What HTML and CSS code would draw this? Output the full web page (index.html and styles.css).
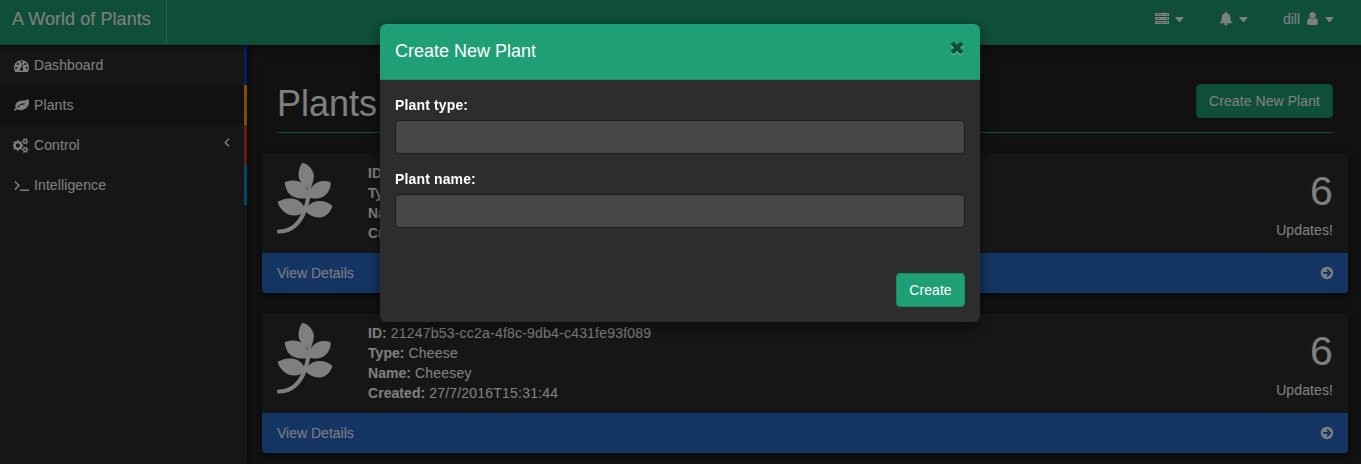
FILE: index.html
```
<!DOCTYPE html>
<html lang="en">
<head>
<meta charset="utf-8">
<title>A World of Plants</title>
<link rel="stylesheet" href="styles.css">
</head>
<body>
<svg class="defs" aria-hidden="true">
  <symbol id="sprig" viewBox="0 0 56 72">
    <path class="stem" d="M1.800 69.500C15 70 23.500 60 27.500 49C30.500 41 32.700 32 32.700 20"/>
    <path d="M25.300 .8C33 3 37 9 36.800 15C36.500 20 34.500 24 32.500 27C25.500 24 21.300 18 21.500 12C21.800 7 23.500 3 25.300 .8Z"/>
    <path d="M7.800 20.300C15 17.300 22.500 18.500 27 22.500C30.500 26 31.500 31 31.500 36C25 37.300 17.500 36.800 12.500 32C9.500 29 7.800 24 7.800 20.300Z"/>
    <path d="M53.800 20.300C47 17.500 40 19 36 23.500C33.500 27 32.500 31 32 35.800C38 37.300 45.500 36.800 50 31.500C52.500 28.500 54 24 53.800 20.300Z"/>
    <path d="M.6 39.800C7 36 14.500 35.500 20 37.700C25 40.500 27.500 44 28.500 49C23.500 54 15 54.800 9 51.200C5 48.500 1.800 44.500 .6 39.800Z"/>
    <path d="M55.300 44C50 38.500 42 38 36.500 40C32 42 30 45 28 48.500C33 54.500 41 57 47 54.500C51 52.500 54 49 55.300 44Z"/>
  </symbol>
  <symbol id="go" viewBox="0 0 14 14">
    <circle cx="7" cy="7" r="6.200"/>
    <path class="go-arrow" d="M3 7H10M7 3.500L10.400 7L7 10.500"/>
  </symbol>
</svg>

<header class="topbar">
  <a class="brand">A World of Plants</a>
  <ul class="menu">
    <li><svg class="ic" viewBox="0 0 14 12"><path fill-rule="evenodd" d="M0 0H14V3H0ZM1 1.300V1.800H8V1.300ZM11.500 1V2H13V1ZM0 4H14V7H0ZM1 5.300V5.800H5V5.300ZM11.500 5V6H13V5ZM0 8H14V11H0ZM1 9.300V9.800H10V9.300ZM11.500 9V10H13V9Z"/></svg><i class="caret"></i></li>
    <li><svg class="ic" viewBox="0 0 14 14"><path d="M7 0C7.700 0 8.200.6 8 1.200C10.300 1.700 11.300 3.500 11.300 5.500C11.300 8 12 9.700 13.500 11.300H.5C2 9.700 2.700 8 2.700 5.500C2.700 3.500 3.700 1.700 6 1.200C5.800.6 6.300 0 7 0ZM5 11.500H9C9 14.300 5 14.300 5 11.500Z"/></svg><i class="caret"></i></li>
    <li><span>dill</span><svg class="ic user" viewBox="0 0 1792 1792"><path d="M1536 1399q0 109-62.500 187t-150.500 78h-854q-88 0-150.500-78t-62.500-187q0-85 8.500-160.500t31.500-152 58.500-131 94-89 134.500-34.500q131 128 313 128t313-128q76 0 134.500 34.500t94 89 58.500 131 31.500 152 8.500 160.500zm-256-887q0 159-112.500 271.500t-271.500 112.500-271.500-112.500-112.500-271.500 112.500-271.500 271.500-112.500 271.500 112.500 112.500 271.500z"/></svg><i class="caret"></i></li>
  </ul>
</header>

<div class="layout">
  <nav class="sidebar">
    <a class="item blue"><svg class="ic" viewBox="0 0 1792 1792"><path d="M384 1152q0-53-37.500-90.500t-90.500-37.500-90.500 37.500-37.500 90.500 37.500 90.500 90.500 37.500 90.500-37.500 37.500-90.500zm192-448q0-53-37.500-90.500t-90.500-37.500-90.500 37.500-37.500 90.500 37.500 90.500 90.500 37.500 90.500-37.500 37.500-90.500zm428 481l101-382q6-26-7.500-48.500t-38.500-29.500-48 6.500-30 39.500l-101 382q-60 5-107 43.500t-63 98.500q-20 77 20 146t117 89 146-20 89-117q16-60-6-117t-72-91zm660-33q0-53-37.500-90.500t-90.500-37.500-90.500 37.500-37.500 90.500 37.500 90.500 90.500 37.500 90.500-37.500 37.500-90.500zm-640-640q0-53-37.500-90.500t-90.500-37.500-90.500 37.500-37.500 90.500 37.500 90.500 90.500 37.500 90.500-37.500 37.500-90.500zm448 192q0-53-37.500-90.500t-90.500-37.500-90.500 37.500-37.500 90.500 37.500 90.500 90.500 37.500 90.500-37.500 37.500-90.500zm320 448q0 261-141 483-19 29-54 29h-1402q-35 0-54-29-141-221-141-483 0-182 71-348t191-286 286-191 348-71 348 71 286 191 191 286 71 348z"/></svg>Dashboard</a>
    <a class="item orange active"><svg class="ic" viewBox="0 0 1792 1792"><path d="M1280 704q0-26-19-45t-45-19q-172 0-318 49.500t-259.500 134-235.500 219.500q-19 21-19 45 0 26 19 45t45 19q24 0 45-19 27-24 74-71t67-66q137-124 268.500-176t313.500-52q26 0 45-19t19-45zm512-198q0 95-20 193-46 224-184.500 383t-357.500 268q-214 108-438 108-148 0-286-47-15-5-88-42t-96-37q-16 0-39.500 32t-45 70-52.500 70-60 32q-43 0-63.500-17.500t-45.500-59.500q-2-4-6-11t-5.500-10-3-9.500-1.500-13.500q0-35 31-73.500t68-65.500 68-56 31-48q0-4-14-38t-16-44q-9-51-9-104 0-115 43.500-220t119-184.500 170.500-139 204-95.500q55-18 145-25.500t179.500-9 178.500-6 163.500-24 113.500-56.500l29.500-29.500 29.500-28 27-20 36.500-16 43.500-4.500q39 0 70.500 46t47.500 112 24 124 8 96z"/></svg>Plants</a>
    <a class="item red"><svg class="ic wide" viewBox="0 0 1920 1792"><path d="M832 896q0-106-75-181t-181-75-181 75-75 181 75 181 181 75 181-75 75-181zm768 512q0-52-38-90t-90-38-90 38-38 90q0 53 37.500 90.500t90.500 37.500 90.500-37.500 37.500-90.500zm0-1024q0-52-38-90t-90-38-90 38-38 90q0 53 37.500 90.500t90.500 37.500 90.500-37.500 37.500-90.500zm-384 421v185q0 10-7 19.500t-16 10.500l-155 24q-11 35-32 76 34 48 90 115 7 11 7 20 0 12-7 19-23 30-82.500 89.500t-78.500 59.500q-11 0-21-7l-115-90q-37 19-77 31-11 108-23 155-7 24-30 24h-186q-11 0-20-7.500t-10-17.500l-23-153q-34-10-75-31l-118 89q-7 7-20 7-11 0-21-8-144-133-144-160 0-9 7-19 10-14 41-53t47-61q-23-44-35-82l-152-24q-10-1-17-9.500t-7-19.500v-185q0-10 7-19.500t16-10.500l155-24q11-35 32-76-34-48-90-115-7-11-7-20 0-12 7-20 22-30 82-89t79-59q11 0 21 7l115 90q34-18 77-32 11-108 23-154 7-24 30-24h186q11 0 20 7.500t10 17.500l23 153q34 10 75 31l118-89q8-7 20-7 11 0 21 8 144 133 144 160 0 8-7 19-12 16-42 54t-45 60q23 48 34 82l152 23q10 2 17 10.500t7 19.500zm640 533v140q0 16-149 31-12 27-30 52 51 113 51 138 0 4-4 7-122 71-124 71-8 0-46-47t-52-68q-20 2-30 2t-30-2q-14 21-52 68t-46 47q-2 0-124-71-4-3-4-7 0-25 51-138-18-25-30-52-149-15-149-31v-140q0-16 149-31 13-29 30-52-51-113-51-138 0-4 4-7 4-2 35-20t59-34 30-16q8 0 46 46.500t52 67.500q20-2 30-2t30 2q51-71 92-112l6-2q4 0 124 70 4 3 4 7 0 25-51 138 17 23 30 52 149 15 149 31zm0-1024v140q0 16-149 31-12 27-30 52 51 113 51 138 0 4-4 7-122 71-124 71-8 0-46-47t-52-68q-20 2-30 2t-30-2q-14 21-52 68t-46 47q-2 0-124-71-4-3-4-7 0-25 51-138-18-25-30-52-149-15-149-31v-140q0-16 149-31 13-29 30-52-51-113-51-138 0-4 4-7 4-2 35-20t59-34 30-16q8 0 46 46.500t52 67.500q20-2 30-2t30 2q51-71 92-112l6-2q4 0 124 70 4 3 4 7 0 25-51 138 17 23 30 52 149 15 149 31z"/></svg>Control<svg class="chev" viewBox="0 0 6 9"><path d="M5 .7L1.200 4.500L5 8.300"/></svg></a>
    <a class="item cyan"><svg class="ic line" viewBox="0 0 14 14"><path d="M.8 3.200L4.600 7L.8 10.800M5.500 11.500H14"/></svg>Intelligence</a>
  </nav>

  <main class="page">
    <div class="heading">
      <h1>Plants</h1>
      <button class="btn btn-new">Create New Plant</button>
    </div>
    <section class="card">
      <div class="card-body">
        <svg class="sprig"><use href="#sprig"/></svg>
        <div class="info">
          <div><b>ID:</b></div>
          <div><b>Type:</b></div>
          <div><b>Name:</b></div>
          <div><b>Created:</b></div>
        </div>
        <div class="stat"><div class="num">6</div><div>Updates!</div></div>
      </div>
      <div class="card-foot"><span>View Details</span><svg class="go"><use href="#go"/></svg></div>
    </section>
    <section class="card">
      <div class="card-body">
        <svg class="sprig"><use href="#sprig"/></svg>
        <div class="info">
          <div><b>ID:</b> <span>21247b53-cc2a-4f8c-9db4-c431fe93f089</span></div>
          <div><b>Type:</b> <span>Cheese</span></div>
          <div><b>Name:</b> <span>Cheesey</span></div>
          <div><b>Created:</b> <span>27/7/2016T15:31:44</span></div>
        </div>
        <div class="stat"><div class="num">6</div><div>Updates!</div></div>
      </div>
      <div class="card-foot"><span>View Details</span><svg class="go"><use href="#go"/></svg></div>
    </section>
  </main>
</div>

<div class="backdrop">
  <div class="modal">
    <div class="modal-head">
      <h4>Create New Plant</h4>
      <svg class="close" viewBox="0 0 16 16"><path class="close-hi" d="M3 4L13 14M13 4L3 14"/><path class="close-x" d="M3 3L13 13M13 3L3 13"/></svg>
    </div>
    <form class="modal-body">
      <label for="ptype">Plant type:</label>
      <input id="ptype" type="text">
      <label for="pname">Plant name:</label>
      <input id="pname" type="text">
    </form>
    <div class="modal-foot"><button class="btn btn-create">Create</button></div>
  </div>
</div>
</body>
</html>
```
FILE: styles.css
```
* { box-sizing: border-box; }
html, body { height: 100%; }
body {
  margin: 0;
  overflow: hidden;
  background: #222;
  color: #fff;
  font: 14px/20px "Liberation Sans", Arial, sans-serif;
}
.defs { position: absolute; width: 0; height: 0; }
h1, h4 { margin: 0; font-weight: normal; }
svg { display: block; fill: #fff; flex: none; }

.topbar {
  position: relative;
  z-index: 1;
  display: flex;
  justify-content: space-between;
  height: 45px;
  background: #1f9f75;
  border-bottom: 1px solid #1b8a65;
  box-shadow: 0 1px 8px rgba(0, 0, 0, .5);
}
.brand {
  width: 167px;
  padding: 9px 0 0 12px;
  font-size: 18px;
  letter-spacing: .07px;
  border-right: 1px solid #50b393;
}
.menu {
  display: flex;
  gap: 35px;
  margin: 0;
  padding: 9px 27px 0 0;
  list-style: none;
}
.menu li { display: flex; align-items: center; height: 20px; }
.ic { width: 14px; height: 14px; }
.menu .ic { margin-right: 6px; }
.menu .user { width: 15px; height: 15px; margin: 0 5px 1px; }
.caret {
  border: 4.500px solid transparent;
  border-top: 5px solid #fff;
  border-bottom: 0;
  width: 9px;
  margin-top: 0;
}

.layout { display: flex; height: calc(100% - 45px); }
.sidebar {
  flex: none;
  width: 247px;
  background: #2d2d2d;
  box-shadow: 2px 0 6px rgba(0, 0, 0, .6);
}
.item {
  display: flex;
  align-items: center;
  gap: 5px;
  height: 40px;
  padding-left: 14px;
  letter-spacing: .1px;
  border-right: 3px solid;
}
.item .ic { width: 15px; height: 15px; }
.item .wide { width: 16px; margin: 0 0 0 -1px; }
.active { background: #222; }
.blue { border-color: #0040d0; }
.orange { border-color: #ff9900; }
.red { border-color: #c83232; }
.cyan { border-color: #0090d0; }
.line, .chev { fill: none; stroke: #fff; stroke-width: 1.400; }
.chev { width: 6px; height: 9px; margin: -5px 14px 0 auto; }

.page { flex: 1; padding: 39px 13px 0 15px; }
.heading {
  display: flex;
  justify-content: space-between;
  align-items: flex-start;
  height: 49px;
  margin: 0 15px 20px;
  border-bottom: 1px solid #1f9f75;
}
h1 { font-size: 36px; line-height: 40px; }
.btn {
  height: 34px;
  padding: 0;
  color: #fff;
  background: #1f9f75;
  border: 1px solid #1b8a65;
  border-radius: 4px;
  font: inherit;
  letter-spacing: .08px;
}
.btn-new { width: 137px; }
.btn-create { width: 69px; }
.card {
  height: 140px;
  margin-bottom: 20px;
  border-radius: 4px;
  overflow: hidden;
  background: #2d2d2d;
  box-shadow: 1px 2px 6px rgba(0, 0, 0, .6);
}
.card-body { display: flex; height: 100px; padding: 10px 15px; }
.sprig { width: 56px; height: 72px; margin-top: -1px; }
.stem { fill: none; stroke: #fff; stroke-width: 4; stroke-linecap: round; }
.info { margin-left: 35px; letter-spacing: .05px; }
.info span { letter-spacing: .21px; }
.stat { margin-left: auto; text-align: right; letter-spacing: .1px; }
.num { height: 57px; font-size: 41px; line-height: 57px; }
.card-foot {
  display: flex;
  justify-content: space-between;
  align-items: center;
  height: 40px;
  padding: 0 14px 0 15px;
  background: #2869c8;
}
.go { width: 14px; height: 14px; }
.go-arrow { fill: none; stroke: #2869c8; stroke-width: 1.800; }

.backdrop {
  position: fixed;
  z-index: 2;
  inset: 0;
  padding-top: 24px;
  background: rgba(0, 0, 0, .5);
}
.modal {
  width: 600px;
  height: 298px;
  margin: 0 auto 0 380px;
  border-radius: 6px;
  overflow: hidden;
  background: #2d2d2d;
  box-shadow: 0 5px 15px rgba(0, 0, 0, .5);
}
.modal-head {
  display: flex;
  justify-content: space-between;
  align-items: flex-start;
  height: 56px;
  padding: 16px 15px 0;
  background: #1f9f75;
  border-bottom: 1px solid #1b8a65;
}
h4 { font-size: 18px; line-height: 22px; }
.close { width: 16px; height: 16px; }
.close path { stroke-width: 4.500; }
.close-hi { stroke: #8fcfba; }
.close-x { stroke: #0f4f3a; }
.modal-body { display: flex; flex-direction: column; padding: 15px 15px 0; }
label { margin-bottom: 5px; font-weight: bold; letter-spacing: .14px; }
input {
  height: 34px;
  margin: 0 0 15px;
  padding: 6px 12px;
  color: #fff;
  background: #464646;
  border: 1px solid #1c1c1c;
  border-radius: 4px;
  box-shadow: inset 0 1px 1px rgba(0, 0, 0, .075);
}
.modal-foot { display: flex; justify-content: flex-end; padding: 30px 15px 15px; }
```
